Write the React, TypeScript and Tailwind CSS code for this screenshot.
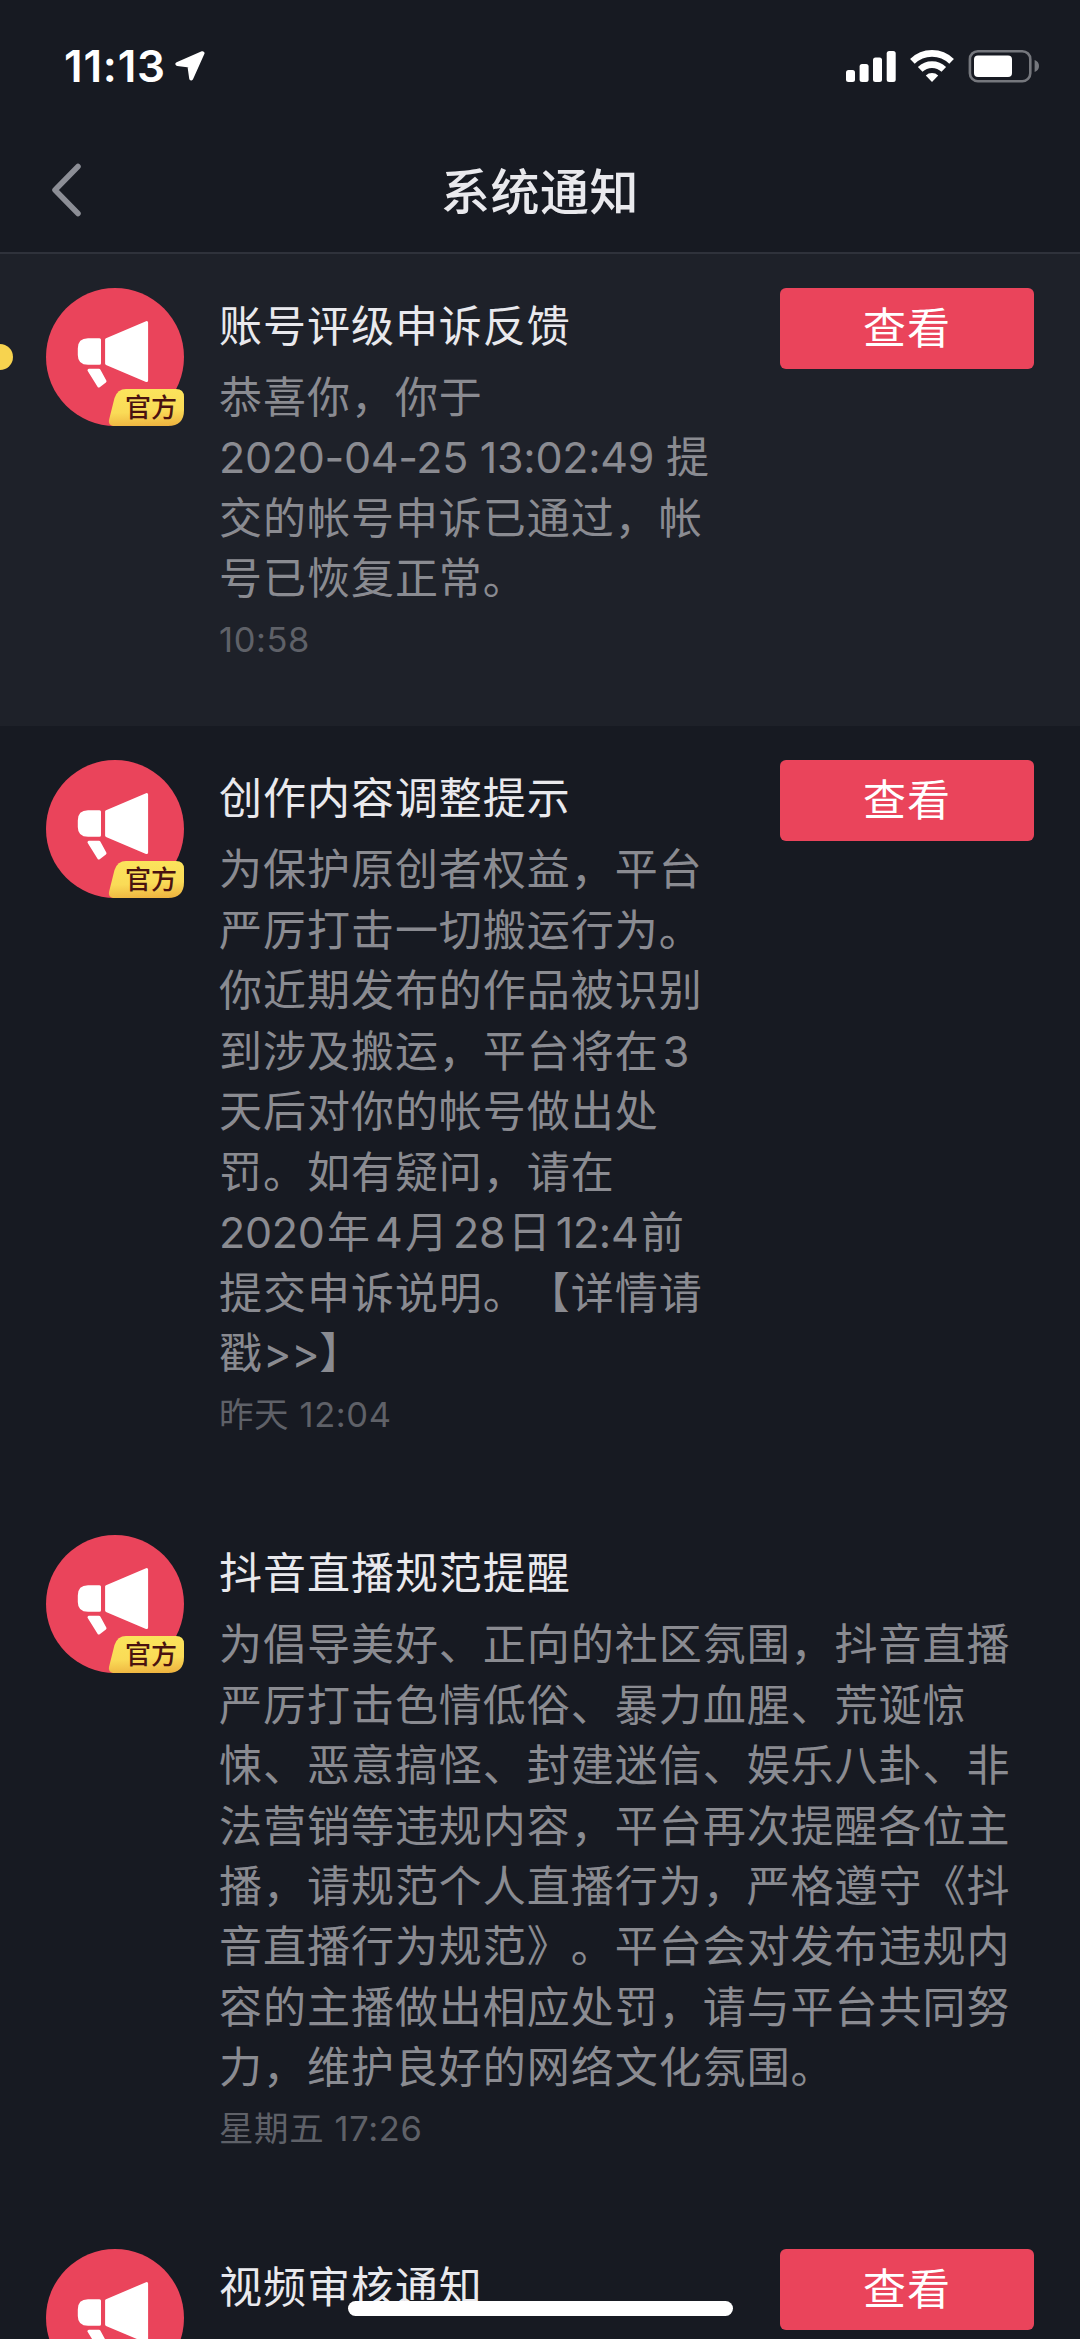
type Notice = {
  title: string
  lines: string[]
  time?: string
  action?: boolean
  unread?: boolean
}

const notices: Notice[] = [
  {
    title: '账号评级申诉反馈',
    lines: [
      '恭喜你，你于',
      '2020-04-25 13:02:49 提',
      '交的帐号申诉已通过，帐',
      '号已恢复正常。',
    ],
    time: '10:58',
    action: true,
    unread: true,
  },
  {
    title: '创作内容调整提示',
    lines: [
      '为保护原创者权益，平台',
      '严厉打击一切搬运行为。',
      '你近期发布的作品被识别',
      '到涉及搬运，平台将在3',
      '天后对你的帐号做出处',
      '罚。如有疑问，请在',
      '2020年4月28日12:4前',
      '提交申诉说明。【详情请',
      '戳>>】',
    ],
    time: '昨天 12:04',
    action: true,
  },
  {
    title: '抖音直播规范提醒',
    lines: [
      '为倡导美好、正向的社区氛围，抖音直播',
      '严厉打击色情低俗、暴力血腥、荒诞惊',
      '悚、恶意搞怪、封建迷信、娱乐八卦、非',
      '法营销等违规内容，平台再次提醒各位主',
      '播，请规范个人直播行为，严格遵守《抖',
      '音直播行为规范》。平台会对发布违规内',
      '容的主播做出相应处罚，请与平台共同努',
      '力，维护良好的网络文化氛围。',
    ],
    time: '星期五 17:26',
  },
  {
    title: '视频审核通知',
    lines: [],
    action: true,
  },
]

function StatusBar() {
  return (
    <div className="flex h-[132px] shrink-0 items-center justify-between pl-[64px] pr-[40px]">
      <div className="flex items-center">
        <span className="text-[44px] font-semibold leading-none tracking-[0.8px] text-white">
          11:13
        </span>
        <svg className="ml-[9px] h-[30px] w-[30px]" viewBox="0 0 30 30">
          <path
            d="M27.5 2.2 L2.4 13 L14.4 14.6 L16.2 27.4 Z"
            fill="#fff"
            stroke="#fff"
            strokeWidth="4"
            strokeLinejoin="round"
          />
        </svg>
      </div>
      <div className="flex items-center">
        <svg className="h-[32px] w-[50px]" viewBox="0 0 50 32" fill="#fff">
          <rect x="0" y="20" width="9" height="12" rx="2.5" />
          <rect x="13.6" y="14" width="9" height="18" rx="2.5" />
          <rect x="27" y="7.6" width="9" height="24.4" rx="2.5" />
          <rect x="40.7" y="1" width="9" height="31" rx="2.5" />
        </svg>
        <svg className="ml-[14px] h-[32px] w-[44px]" viewBox="0 0 44 32">
          <g fill="none" stroke="#fff" strokeWidth="6.6">
            <path d="M2.4 11.4 A28 28 0 0 1 41.6 11.4" />
            <path d="M10.2 19.4 A17 17 0 0 1 33.8 19.4" />
          </g>
          <path d="M22 32 L15.8 25.4 A9 9 0 0 1 28.2 25.4 Z" fill="#fff" />
        </svg>
        <svg className="ml-[14px] h-[34px] w-[72px]" viewBox="0 0 72 34">
          <rect
            x="1.9"
            y="2.2"
            width="60.4"
            height="30"
            rx="8"
            fill="none"
            stroke="#75777d"
            strokeWidth="2.6"
          />
          <rect x="6" y="6.6" width="38" height="21.4" rx="4" fill="#fff" />
          <path d="M66.6 11 Q71 12.6 71 17 Q71 21.4 66.6 23 Z" fill="#75777d" />
        </svg>
      </div>
    </div>
  )
}

function Header() {
  return (
    <header className="relative flex h-[122px] shrink-0 items-center justify-center border-b-2 border-[#2f323b]">
      <svg className="absolute left-[50px] top-[30px] h-[56px] w-[34px]" viewBox="0 0 34 56">
        <path
          d="M28 4.5 L5 28 L28 51.5"
          fill="none"
          stroke="#8c8e96"
          strokeWidth="5.5"
          strokeLinecap="round"
          strokeLinejoin="round"
        />
      </svg>
      <h1 className="text-[49px] font-medium leading-none tracking-[0.5px] text-[#e9e9ed]">
        系统通知
      </h1>
    </header>
  )
}

function Avatar({ badge }: { badge: boolean }) {
  return (
    <div className="relative h-[138px] w-[138px] shrink-0">
      <svg className="h-[138px] w-[138px]" viewBox="0 0 138 138">
        <defs>
          <linearGradient id="badge" x1="0.5" y1="0" x2="0.6" y2="1">
            <stop offset="0" stopColor="#fbe45c" />
            <stop offset="0.6" stopColor="#fadb57" />
            <stop offset="1" stopColor="#eeb440" />
          </linearGradient>
        </defs>
        <circle cx="69" cy="69" r="69" fill="#ea445b" />
        <g fill="#fff" stroke="#fff" strokeWidth="3" strokeLinejoin="round">
          <path d="M60.6 51.6 L100.6 34.6 V92.5 L60.6 75.5 Z" />
          <path d="M53.5 51.8 V75.3 H42 Q33.3 75.3 33.3 67 V60.5 Q33.3 51.8 42 51.8 Z" />
          <path d="M43 82.3 H53 L59 93.2 L52.8 98 Z" />
        </g>
        <path
          d="M80 101 H130 Q138 101 138 109 V122 Q138 138 122 138 H67 Q62 137 63 132 L68.5 110 Q71.5 101 80 101 Z"
          fill="url(#badge)"
        />
      </svg>
      {badge && (
        <span className="absolute left-[79px] top-[106px] whitespace-nowrap text-[26px] font-medium leading-[27px] text-[#4a1210]">
          官方
        </span>
      )}
    </div>
  )
}

// Digits sit tighter than the hanzi and keep a small gap on both sides
function Line({ text }: { text: string }) {
  const runs = text.split(/([\x20-\x7e]+)/).filter(Boolean)

  return (
    <p>
      {runs.map((run, i) => {
        if (!/^[\x20-\x7e]/.test(run)) return <span key={i}>{run}</span>
        const gapLeft = i > 0 && /^\d/.test(run)
        const gapRight = i < runs.length - 1 && /\d$/.test(run)
        return (
          <span
            key={i}
            className={`tracking-[-0.3px] ${gapLeft ? 'pl-[4px]' : ''} ${gapRight ? 'pr-[2.5px]' : ''}`}
          >
            {run}
          </span>
        )
      })}
    </p>
  )
}

function NoticeRow({ title, lines, time, action, unread }: Notice) {
  return (
    <section
      className={`relative flex shrink-0 px-[46px] pt-[34px] pb-[51px] ${unread ? 'bg-[#1e2129]' : ''}`}
    >
      {unread && (
        <i className="absolute left-[-13px] top-[90px] h-[26px] w-[26px] rounded-full bg-[#f7d34f]" />
      )}
      <Avatar badge={Boolean(time)} />
      <div className="ml-[35px] flex-1 whitespace-pre">
        <h2 className="h-[79px] text-[43px] leading-[77px] tracking-[0.97px] text-[#e9e9ed]">
          {title}
        </h2>
        <div className="text-[43px] leading-[60.47px] tracking-[0.97px] text-[#8a8b91]">
          {lines.map((line) => (
            <Line key={line} text={line} />
          ))}
        </div>
        {time && (
          <p className="h-[66.5px] text-[34.5px] leading-[62px] tracking-[0.6px] text-[#5f6168]">
            {time}
          </p>
        )}
      </div>
      {action && (
        <button className="h-[81px] w-[254px] shrink-0 rounded-[6px] bg-[#ea445b] text-[43px] leading-[81px] tracking-[0.97px] text-white">
          查看
        </button>
      )}
    </section>
  )
}

export default function App() {
  return (
    <div className="relative flex h-[2339px] w-[1080px] flex-col overflow-hidden bg-[#171a22] font-[Inter,'Noto_Sans_CJK_SC',sans-serif] [text-spacing-trim:space-all]">
      <StatusBar />
      <Header />
      <main className="flex flex-col">
        {notices.map((notice) => (
          <NoticeRow key={notice.title} {...notice} />
        ))}
      </main>
      <div className="absolute left-[348px] top-[2301px] h-[15px] w-[385px] rounded-full bg-white" />
    </div>
  )
}
